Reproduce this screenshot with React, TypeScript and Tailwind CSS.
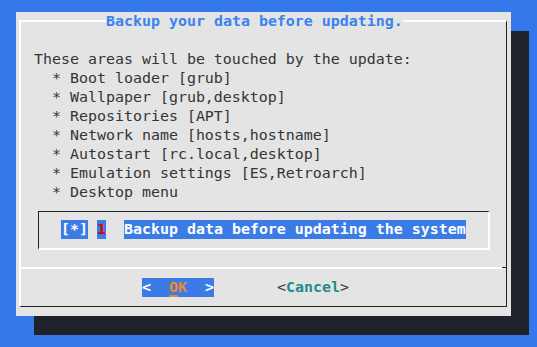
const AREAS = [
  "Boot loader [grub]",
  "Wallpaper [grub,desktop]",
  "Repositories [APT]",
  "Network name [hosts,hostname]",
  "Autostart [rc.local,desktop]",
  "Emulation settings [ES,Retroarch]",
  "Desktop menu",
];

const mono = "font-['DejaVu_Sans_Mono','Liberation_Mono',monospace] text-[14.95px] leading-[19px]";

export default function App() {
  return (
    <div className={`h-[347px] w-[537px] overflow-hidden bg-[#3478ea] pl-[16px] pt-[12px] ${mono}`}>
      <div className="relative h-[304px] w-[495px] bg-[#e4e4e4] pl-[3px] pt-[8px] shadow-[18px_19px_0_#202229]">
        {/* title sits over the top border line */}
        <div className="absolute left-[90px] top-0 whitespace-pre bg-[#e4e4e4] font-bold text-[#3a82f0]">
          Backup your data before updating.
        </div>

        <div className="h-[287px] w-[488px] border-l-2 border-t-2 border-r border-b border-l-white border-t-white border-r-[#222] border-b-[#222]">
          <div className="pl-[13px] pt-[28px] text-[#353535]">
            <div className="whitespace-pre">These areas will be touched by the update:</div>
            {AREAS.map((a) => (
              <div key={a} className="whitespace-pre">{"  * " + a}</div>
            ))}
          </div>

          <div className="ml-[17px] mt-[9px] h-[39px] w-[452px] border-l border-t border-r-2 border-b-2 border-l-[#222] border-t-[#222] border-r-white border-b-white pl-[22px] pt-[8px]">
            <div className="flex whitespace-pre font-bold">
              <span className="bg-[#3a7be6] text-white">[*]</span>
              <span> </span>
              <span className="bg-[#3a7be6] text-[#e00000]">1</span>
              <span>  </span>
              <span className="bg-[#3a7be6] text-white">Backup data before updating the system</span>
            </div>
          </div>

          <div className="mt-[17px] flex items-start">
            <div className="h-[2px] flex-1 bg-white" />
            <div className="h-px w-[4px] bg-[#222]" />
          </div>

          <div className="mt-[9px] flex whitespace-pre pl-[121px]">
            <span className="bg-[#3a7be6] font-bold text-white">
              {"<  "}
              <span className="text-[#f28a1e]">
                <span className="underline decoration-2 underline-offset-[3px]">O</span>K
              </span>
              {"  >"}
            </span>
            <span>{"       "}</span>
            <span className="text-[#353535]">
              {"<"}
              <span className="font-bold text-[#1e8c8c]">Cancel</span>
              {">"}
            </span>
          </div>
        </div>
      </div>
    </div>
  );
}
